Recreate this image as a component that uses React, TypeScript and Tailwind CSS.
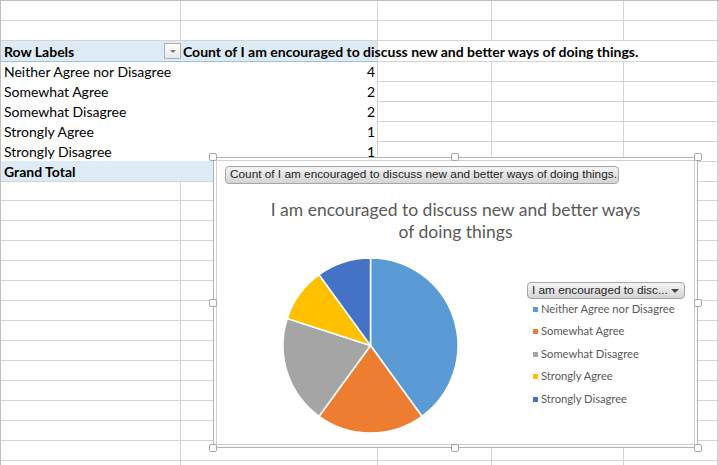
import React from 'react';

type Slice = { label: string; value: number; color: string };

const slices: Slice[] = [
  { label: 'Neither Agree nor Disagree', value: 4, color: '#5B9BD5' },
  { label: 'Somewhat Agree', value: 2, color: '#ED7D31' },
  { label: 'Somewhat Disagree', value: 2, color: '#A5A5A5' },
  { label: 'Strongly Agree', value: 1, color: '#FFC000' },
  { label: 'Strongly Disagree', value: 1, color: '#4472C4' },
];

const cols = 'grid grid-cols-[180px_197px_114px_132px_94px_1fr]';

function PlainRow() {
  return (
    <div className={`${cols} h-5`}>
      {Array.from({ length: 6 }).map((_, i) => (
        <div key={i} className="border-r border-b border-[#D4D4D4]" />
      ))}
    </div>
  );
}

function Tail({ hideLines = false }: { hideLines?: boolean }) {
  return (
    <>
      <div className={hideLines ? 'border-b border-[#D4D4D4]' : 'border-r border-b border-[#D4D4D4]'} />
      <div className={hideLines ? 'border-b border-[#D4D4D4]' : 'border-r border-b border-[#D4D4D4]'} />
      <div className="border-r border-b border-[#D4D4D4]" />
      <div className="border-r border-b border-[#D4D4D4]" />
    </>
  );
}

function DataRow({ label, value, last }: { label: string; value: number; last?: boolean }) {
  return (
    <div className={`${cols} h-5`}>
      <div className={`pl-[3px] pt-px leading-[19px] whitespace-nowrap ${last ? 'border-b border-[#9BC2E6]' : 'border-b border-transparent'}`}>
        {label}
      </div>
      <div
        className={`border-r border-[#D4D4D4] pr-[2px] pt-px text-right leading-[19px] ${last ? 'border-b border-b-[#9BC2E6]' : 'border-b border-b-transparent'}`}
      >
        {value}
      </div>
      <Tail />
    </div>
  );
}

function PieChart() {
  const total = slices.reduce((s, x) => s + x.value, 0);
  const cx = 88.5;
  const cy = 88.5;
  const r = 87.5;
  let acc = 0;
  const pt = (a: number) => [cx + r * Math.sin(a), cy - r * Math.cos(a)];
  return (
    <svg width="177" height="177" viewBox="0 0 177 177" className="shrink-0">
      {slices.map((s) => {
        const a0 = (acc / total) * Math.PI * 2;
        acc += s.value;
        const a1 = (acc / total) * Math.PI * 2;
        const [x0, y0] = pt(a0);
        const [x1, y1] = pt(a1);
        const large = a1 - a0 > Math.PI ? 1 : 0;
        return (
          <path
            key={s.label}
            d={`M${cx} ${cy} L${x0} ${y0} A${r} ${r} 0 ${large} 1 ${x1} ${y1} Z`}
            fill={s.color}
            stroke="#fff"
            strokeWidth="1.5"
            strokeLinejoin="round"
          />
        );
      })}
    </svg>
  );
}

function Handle({ className }: { className: string }) {
  return <div className={`absolute h-2 w-2 rounded-[2px] border border-[#A6A6A6] bg-white ${className}`} />;
}

function FieldButton({ children, className = '' }: { children: React.ReactNode; className?: string }) {
  return (
    <div
      className={`flex items-center rounded-[4px] border border-[#A6A6A6] bg-gradient-to-b from-[#F5F5F5] to-[#D4D4D4] font-['Liberation_Sans',sans-serif] text-[11.8px] text-[#262626] ${className}`}
    >
      {children}
    </div>
  );
}

function Chart() {
  return (
    <div className="absolute left-[213px] top-[157px] h-[291px] w-[485px] border border-[#B4B4B4] bg-white p-[2px]">
      <div className="flex h-full flex-col border border-[#D0D0D0]">
        <FieldButton className="ml-[8px] mt-[5px] h-[18px] w-[394px] pl-[4px]">
          Count of I am encouraged to discuss new and better ways of doing things.
        </FieldButton>
        <div className="mt-[15px] text-center text-[17.5px] leading-[22px] text-[#595959]">
          I am encouraged to discuss new and better ways
          <br />
          of doing things
        </div>
        <div className="mt-[14px] flex">
          <div className="ml-[65px]">
            <PieChart />
          </div>
          <div className="ml-[68px] mt-[25px] flex flex-col">
            <FieldButton className="h-[17px] w-[158px] justify-between pl-[4px] pr-[5px]">
              <span>I am encouraged to disc...</span>
              <span className="h-0 w-0 border-x-[4px] border-t-[4px] border-x-transparent border-t-[#404040]" />
            </FieldButton>
            <div className="-mt-px flex flex-col">
              {slices.map((s) => (
                <div key={s.label} className="flex h-[22.5px] items-center pl-[6px] text-[11.2px] text-[#595959]">
                  <span className="h-[5px] w-[5px]" style={{ background: s.color }} />
                  <span className="ml-[3px]">{s.label}</span>
                </div>
              ))}
            </div>
          </div>
        </div>
      </div>
      <Handle className="-left-[5px] -top-[5px]" />
      <Handle className="left-[237px] -top-[5px]" />
      <Handle className="-right-[5px] -top-[5px]" />
      <Handle className="-left-[5px] top-[141px]" />
      <Handle className="-right-[5px] top-[141px]" />
      <Handle className="-bottom-[5px] -left-[5px]" />
      <Handle className="-bottom-[5px] left-[237px]" />
      <Handle className="-bottom-[5px] -right-[5px]" />
    </div>
  );
}

export default function App() {
  return (
    <div className="relative h-[465px] w-[719px] overflow-hidden bg-white font-['Lato',sans-serif] text-[14px] text-black">
      <div className="border-l border-t border-[#BFBFBF]">
        <PlainRow />
        <PlainRow />
        {/* pivot header */}
        <div className={`${cols} h-5`}>
          <div className="relative border-b border-[#9BC2E6] bg-[#DDEBF7] pl-[3px] pt-px font-bold leading-[19px]">
            Row Labels
            <div className="absolute right-0 top-[2px] flex h-[16px] w-[17px] items-center justify-center border border-[#B0B0B0] bg-gradient-to-b from-white to-[#E8E8E8]">
              <span className="h-0 w-0 border-x-[3.5px] border-t-[3.5px] border-x-transparent border-t-[#7A7A7A]" />
            </div>
          </div>
          <div className="whitespace-nowrap border-r border-b border-r-[#D4D4D4] border-b-[#9BC2E6] bg-[#DDEBF7] pl-[2px] pt-px font-bold leading-[19px]">
            Count of I am encouraged to discuss new and better ways of doing things.
          </div>
          <Tail hideLines />
        </div>
        {slices.map((s, i) => (
          <DataRow key={s.label} label={s.label} value={s.value} last={i === slices.length - 1} />
        ))}
        {/* grand total */}
        <div className={`${cols} h-5`}>
          <div className="border-b border-[#D4D4D4] bg-[#DDEBF7] pl-[3px] pt-px font-bold leading-[19px]">Grand Total</div>
          <div className="border-r border-b border-[#D4D4D4] bg-[#DDEBF7]" />
          <Tail />
        </div>
        {Array.from({ length: 15 }).map((_, i) => (
          <PlainRow key={i} />
        ))}
      </div>
      <Chart />
    </div>
  );
}
